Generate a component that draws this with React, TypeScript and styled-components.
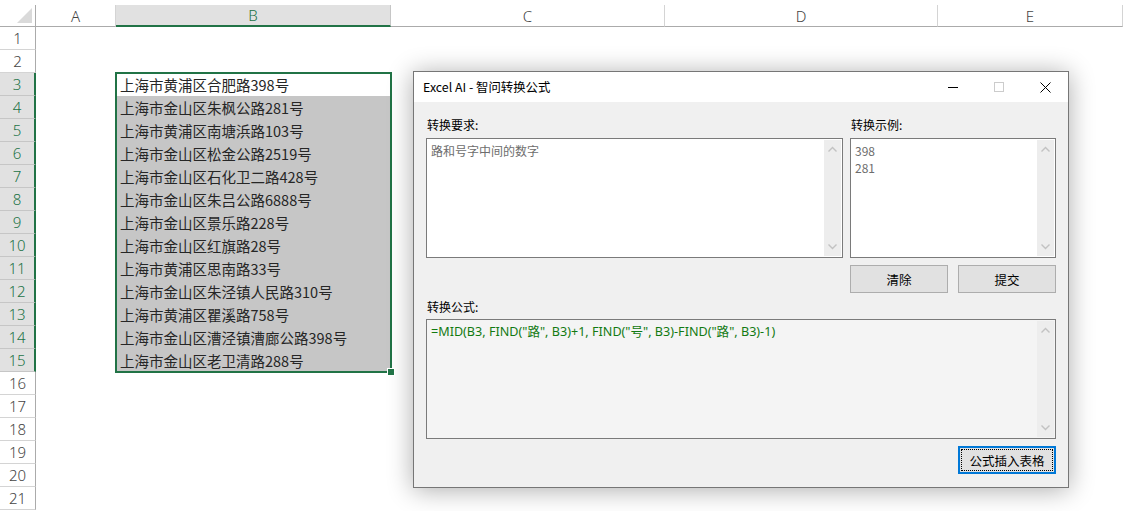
import React from 'react';
import styled, { createGlobalStyle, css } from 'styled-components';

const GlobalStyle = createGlobalStyle`
  html, body {
    margin: 0;
    padding: 0;
    background: #ffffff;
    overflow: hidden;
  }
`;

const green = '#217346';

const Sheet = styled.div`
  position: relative;
  width: 1123px;
  height: 511px;
  display: grid;
  grid-template-columns: 36px 80px 275px 274px 273px 1fr;
  grid-template-rows: 27px repeat(21, 23px);
  background: #fff;
  font-family: 'Noto Sans', 'Open Sans', 'Noto Sans CJK SC', sans-serif;
  overflow: hidden;
`;

const Corner = styled.div`
  position: relative;
  align-self: end;
  height: 22px;
  box-sizing: border-box;
  border-right: 1px solid #ababab;
  border-bottom: 1px solid #ababab;
  &::after {
    content: '';
    position: absolute;
    right: 3px;
    bottom: 3px;
    width: 0;
    height: 0;
    border-left: 15px solid transparent;
    border-bottom: 15px solid #dadada;
  }
`;

interface HeadProps {
  selected?: boolean;
}

const ColHead = styled.div<HeadProps>`
  align-self: end;
  height: 22px;
  box-sizing: border-box;
  display: flex;
  align-items: center;
  justify-content: center;
  font-size: 15px;
  font-weight: 300;
  color: #444;
  border-right: 1px solid #d4d4d4;
  border-bottom: 1px solid #ababab;
  ${({ selected }) =>
    selected &&
    css`
      background: #e1e1e1;
      color: ${green};
      border-bottom: 2px solid ${green};
      border-right-color: #c6c6c6;
    `}
`;

const RowHead = styled.div<HeadProps>`
  grid-column: 1;
  box-sizing: border-box;
  display: flex;
  align-items: center;
  justify-content: center;
  font-size: 15px;
  font-weight: 300;
  color: #444;
  border-bottom: 1px solid #d4d4d4;
  border-right: 1px solid #ababab;
  ${({ selected }) =>
    selected &&
    css`
      background: #e1e1e1;
      color: ${green};
      border-bottom-color: #c6c6c6;
      border-right: 2px solid ${green};
    `}
`;

const Selection = styled.div`
  grid-column: 3;
  grid-row: 4 / 17;
  position: relative;
  display: flex;
  flex-direction: column;
  &::after {
    content: '';
    position: absolute;
    left: -1px;
    top: -1px;
    right: -1px;
    bottom: -1px;
    border: 2px solid ${green};
    pointer-events: none;
  }
`;

const FillHandle = styled.div`
  position: absolute;
  right: -4px;
  bottom: -4px;
  width: 6px;
  height: 6px;
  background: ${green};
  border: 1px solid #fff;
  z-index: 1;
`;

interface CellProps {
  active?: boolean;
}

const Cell = styled.div<CellProps>`
  height: 23px;
  line-height: 23px;
  padding-left: 4px;
  font-family: 'Noto Sans CJK SC', sans-serif;
  font-size: 14.5px;
  color: #262626;
  white-space: nowrap;
  background: ${({ active }) => (active ? '#fff' : '#c6c6c6')};
`;

/* dialog */

const Window = styled.div`
  position: absolute;
  left: 413px;
  top: 71px;
  width: 656px;
  height: 417px;
  box-sizing: border-box;
  border: 1px solid #767676;
  background: #f0f0f0;
  box-shadow: 0 2px 24px rgba(0, 0, 0, 0.33);
  display: flex;
  flex-direction: column;
  font-family: 'Noto Sans CJK SC', 'Noto Sans', sans-serif;
  font-size: 12px;
  color: #000;
`;

const TitleBar = styled.div`
  height: 30px;
  background: #fff;
  display: flex;
  align-items: center;
  padding-left: 9px;
`;

const Title = styled.div`
  flex: 1;
  font-size: 12.4px;
`;

interface CtrlProps {
  disabled?: boolean;
}

const Ctrl = styled.div<CtrlProps>`
  width: 46px;
  height: 30px;
  display: flex;
  align-items: center;
  justify-content: center;
  color: ${({ disabled }) => (disabled ? '#cccccc' : '#000')};
`;

const Body = styled.div`
  flex: 1;
  padding: 15px 12px 0 12px;
  display: flex;
  flex-direction: column;
`;

const TopGrid = styled.div`
  display: grid;
  grid-template-columns: 417px 206px;
  grid-template-rows: auto auto auto;
  column-gap: 7px;
`;

const Label = styled.div`
  height: 16px;
  line-height: 16px;
  padding-left: 1px;
`;

interface BoxProps {
  readOnly?: boolean;
  gap?: number;
}

const Box = styled.div<BoxProps>`
  margin-top: ${({ gap }) => gap ?? 5}px;
  height: 120px;
  box-sizing: border-box;
  border: 1px solid #7a7a7a;
  background: ${({ readOnly }) => (readOnly ? '#f4f4f4' : '#fff')};
  display: flex;
`;

const BoxText = styled.div<{ formula?: boolean }>`
  flex: 1;
  padding: 3px 4px;
  line-height: 17px;
  color: ${({ formula }) => (formula ? '#127a12' : '#6d6d6d')};
  font-family: ${({ formula }) =>
    formula ? "'Noto Sans', 'Noto Sans CJK SC', sans-serif" : "'Noto Sans CJK SC', sans-serif"};
  font-size: ${({ formula }) => (formula ? '12.6px' : '12px')};
  white-space: pre;
`;

const Track = styled.div`
  width: 17px;
  margin: 1px 1px 1px 0;
  background: #ededed;
  display: flex;
  flex-direction: column;
  justify-content: space-between;
  align-items: center;
  padding: 6px 0;
  box-sizing: border-box;
`;

const ButtonRow = styled.div`
  grid-column: 2;
  margin-top: 7px;
  display: flex;
  justify-content: space-between;
`;

interface BtnProps {
  focused?: boolean;
}

const Button = styled.div<BtnProps>`
  width: 98px;
  height: 28px;
  box-sizing: border-box;
  border: 1px solid #adadad;
  background: #e1e1e1;
  display: flex;
  align-items: center;
  justify-content: center;
  font-size: 12.5px;
  ${({ focused }) =>
    focused &&
    css`
      border: 2px solid #0078d7;
      outline: 1px dotted #000;
      outline-offset: -4px;
    `}
`;

const FormulaLabel = styled(Label)`
  margin-top: 6px;
`;

const Footer = styled.div`
  margin-top: 7px;
  display: flex;
  justify-content: flex-end;
`;

const Chevron: React.FC<{ up?: boolean }> = ({ up }) => (
  <svg width="9" height="6" viewBox="0 0 9 6">
    <path
      d={up ? 'M0.5 5.5 L4.5 1.5 L8.5 5.5' : 'M0.5 0.5 L4.5 4.5 L8.5 0.5'}
      fill="none"
      stroke="#c2c2c2"
      strokeWidth="1.4"
    />
  </svg>
);

const Scroll: React.FC = () => (
  <Track>
    <Chevron up />
    <Chevron />
  </Track>
);

const addresses = [
  '上海市黄浦区合肥路398号',
  '上海市金山区朱枫公路281号',
  '上海市黄浦区南塘浜路103号',
  '上海市金山区松金公路2519号',
  '上海市金山区石化卫二路428号',
  '上海市金山区朱吕公路6888号',
  '上海市金山区景乐路228号',
  '上海市金山区红旗路28号',
  '上海市黄浦区思南路33号',
  '上海市金山区朱泾镇人民路310号',
  '上海市黄浦区瞿溪路758号',
  '上海市金山区漕泾镇漕廊公路398号',
  '上海市金山区老卫清路288号'
];

const columns = ['A', 'B', 'C', 'D', 'E'];
const rows = Array.from({ length: 21 }, (_, i) => i + 1);

const App: React.FC = () => {
  return (
    <>
      <GlobalStyle />
      <Sheet>
        <Corner />
        {columns.map((c) => (
          <ColHead key={c} selected={c === 'B'}>
            {c}
          </ColHead>
        ))}
        {rows.map((r) => (
          <RowHead key={r} selected={r >= 3 && r <= 15} style={{ gridRow: r + 1 }}>
            {r}
          </RowHead>
        ))}
        <Selection>
          {addresses.map((a, i) => (
            <Cell key={a} active={i === 0}>
              {a}
            </Cell>
          ))}
          <FillHandle />
        </Selection>

        <Window>
          <TitleBar>
            <Title>Excel AI - 智问转换公式</Title>
            <Ctrl>
              <svg width="10" height="10" viewBox="0 0 10 10">
                <path d="M0 5.5 H10" stroke="#000" strokeWidth="1" />
              </svg>
            </Ctrl>
            <Ctrl disabled>
              <svg width="10" height="10" viewBox="0 0 10 10">
                <rect x="0.5" y="0.5" width="9" height="9" fill="none" stroke="#cccccc" strokeWidth="1" />
              </svg>
            </Ctrl>
            <Ctrl>
              <svg width="11" height="11" viewBox="0 0 11 11">
                <path d="M0.5 0.5 L10.5 10.5 M10.5 0.5 L0.5 10.5" stroke="#000" strokeWidth="1" />
              </svg>
            </Ctrl>
          </TitleBar>
          <Body>
            <TopGrid>
              <Label>转换要求:</Label>
              <Label>转换示例:</Label>
              <Box>
                <BoxText>路和号字中间的数字</BoxText>
                <Scroll />
              </Box>
              <Box>
                <BoxText>{'398\n281'}</BoxText>
                <Scroll />
              </Box>
              <ButtonRow>
                <Button>清除</Button>
                <Button>提交</Button>
              </ButtonRow>
            </TopGrid>
            <FormulaLabel>转换公式:</FormulaLabel>
            <Box readOnly gap={4}>
              <BoxText formula>=MID(B3, FIND("路", B3)+1, FIND("号", B3)-FIND("路", B3)-1)</BoxText>
              <Scroll />
            </Box>
            <Footer>
              <Button focused>公式插入表格</Button>
            </Footer>
          </Body>
        </Window>
      </Sheet>
    </>
  );
};

export default App;
